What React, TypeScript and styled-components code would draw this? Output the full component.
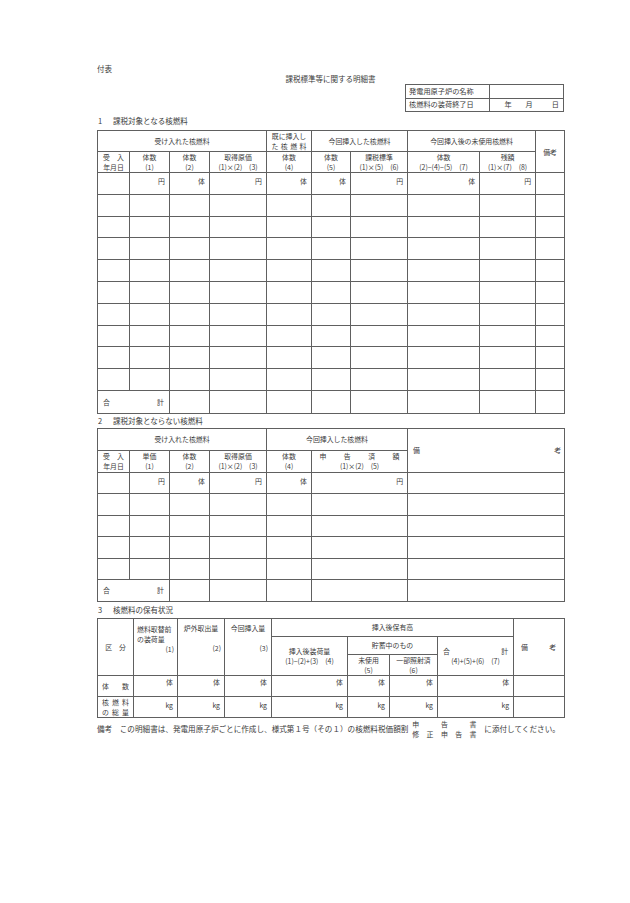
import React from "react";
import styled, { createGlobalStyle } from "styled-components";

const GlobalStyle = createGlobalStyle`
  html, body {
    margin: 0;
    padding: 0;
    background: #fff;
  }
  body {
    font-family: "Noto Sans CJK JP", "Noto Sans", sans-serif;
    color: #3a3a3a;
  }
`;

const Page = styled.div`
  width: 467px;
  margin-left: 97px;
  padding-top: 64px;
  font-size: 7.5px;
  line-height: 10px;
`;

const Caption = styled.div`
  height: 10px;
  line-height: 10px;
`;

const Title = styled.div`
  height: 10px;
  line-height: 10px;
  text-align: center;
`;

const InfoBox = styled.table`
  width: 159px;
  margin: 0 0 0 auto;
  border-collapse: collapse;
  table-layout: fixed;
  font-size: 7.2px;
`;

const InfoRow = styled.tr`
  height: 13.5px;
`;

const InfoCell = styled.td<{ $w?: number }>`
  border: 1px solid #606060;
  padding: 0 3px;
  width: ${(p) => (p.$w ? `${p.$w}px` : "auto")};
  white-space: nowrap;
  line-height: 11px;
`;

const DateParts = styled.div`
  display: flex;
  justify-content: flex-end;
  padding-right: 1px;

  span:nth-child(1) {
    margin-right: 14px;
  }
  span:nth-child(2) {
    margin-right: 19px;
  }
`;

const SectionLabel = styled.div<{ $h: number }>`
  height: ${(p) => p.$h}px;
  display: flex;
  align-items: center;
  padding-left: 1px;
`;

const Num = styled.span`
  width: 15px;
`;

const Grid = styled.table`
  width: 100%;
  table-layout: fixed;
  border-collapse: collapse;
  font-size: 6.9px;
  line-height: 10px;
`;

const Col = styled.col<{ $w: number }>`
  width: ${(p) => p.$w}px;
`;

const Row = styled.tr<{ $h: number }>`
  height: ${(p) => p.$h}px;
`;

type Align = "left" | "center" | "right";

const Cell = styled.td<{ $align?: Align; $valign?: "top" | "middle"; $pad?: string }>`
  border: 1px solid #606060;
  padding: ${(p) => p.$pad ?? "0 3px"};
  text-align: ${(p) => p.$align ?? "center"};
  vertical-align: ${(p) => p.$valign ?? "middle"};
  white-space: nowrap;
  overflow: hidden;
`;

const UnitCell = styled.td<{ $top?: number }>`
  border: 1px solid #606060;
  padding: ${(p) => p.$top ?? 3}px 4px 0 0;
  text-align: right;
  vertical-align: top;
  white-space: nowrap;
`;

const SpreadLine = styled.span<{ $w?: number }>`
  display: flex;
  justify-content: space-between;
  width: ${(p) => (p.$w ? `${p.$w}px` : "auto")};
  margin: ${(p) => (p.$w ? "0 auto" : "0")};
`;

const Spread = ({ text, w }: { text: string; w?: number }) => (
  <SpreadLine $w={w}>
    {[...text].map((c, i) => (
      <span key={i}>{c}</span>
    ))}
  </SpreadLine>
);

const Line = styled.div<{ $align?: Align }>`
  text-align: ${(p) => p.$align ?? "center"};
  min-height: 10px;
`;

const Note = styled.div`
  display: flex;
  align-items: center;
  height: 22px;
  white-space: nowrap;
  font-size: 7.6px;
`;

const NoteStack = styled.div`
  display: flex;
  flex-direction: column;
  width: 64px;
  margin: 0 8px 0 4px;
  font-size: 6.9px;
  line-height: 10px;
`;

const t1Cols = [32, 40, 40, 57, 45, 39, 57, 72, 56, 29];
const t1Units = ["", "円", "体", "円", "体", "体", "円", "体", "円", ""];

const t2Cols = [32, 40, 40, 57, 45, 96, 157];
const t2Units = ["", "円", "体", "円", "体", "円", ""];

const t3Cols = [36, 44, 47, 47, 76, 42, 48, 76, 51];

const Blank = ({ n }: { n: number }) => (
  <>
    {Array.from({ length: n }, (_, i) => (
      <Cell key={i} />
    ))}
  </>
);

const TaxableTable = () => (
  <Grid>
    <colgroup>
      {t1Cols.map((w, i) => (
        <Col key={i} $w={w} />
      ))}
    </colgroup>
    <tbody>
      <Row $h={21}>
        <Cell colSpan={4}>受け入れた核燃料</Cell>
        <Cell>
          <Line>既に挿入し</Line>
          <Spread text="た核燃料" w={35} />
        </Cell>
        <Cell colSpan={2}>今回挿入した核燃料</Cell>
        <Cell colSpan={2}>今回挿入後の未使用核燃料</Cell>
        <Cell rowSpan={2}>備考</Cell>
      </Row>
      <Row $h={21}>
        <Cell>
          <Spread text="受入" w={21} />
          <Line>年月日</Line>
        </Cell>
        <Cell>
          <Line>体数</Line>
          <Line>(1)</Line>
        </Cell>
        <Cell>
          <Line>体数</Line>
          <Line>(2)</Line>
        </Cell>
        <Cell>
          <Line>取得原価</Line>
          <Line>(1)×(2)　(3)</Line>
        </Cell>
        <Cell>
          <Line>体数</Line>
          <Line>(4)</Line>
        </Cell>
        <Cell>
          <Line>体数</Line>
          <Line>(5)</Line>
        </Cell>
        <Cell>
          <Line>課税標準</Line>
          <Line>(1)×(5)　(6)</Line>
        </Cell>
        <Cell>
          <Line>体数</Line>
          <Line>(2)−(4)−(5)　(7)</Line>
        </Cell>
        <Cell>
          <Line>残額</Line>
          <Line>(1)×(7)　(8)</Line>
        </Cell>
      </Row>
      <Row $h={21.8}>
        {t1Units.map((u, i) => (
          <UnitCell key={i}>{u}</UnitCell>
        ))}
      </Row>
      {Array.from({ length: 9 }, (_, r) => (
        <Row key={r} $h={21.8}>
          <Blank n={10} />
        </Row>
      ))}
      <Row $h={23}>
        <Cell colSpan={2} $pad="0 5px">
          <Spread text="合計" />
        </Cell>
        <Blank n={8} />
      </Row>
    </tbody>
  </Grid>
);

const ExemptTable = () => (
  <Grid>
    <colgroup>
      {t2Cols.map((w, i) => (
        <Col key={i} $w={w} />
      ))}
    </colgroup>
    <tbody>
      <Row $h={22}>
        <Cell colSpan={4}>受け入れた核燃料</Cell>
        <Cell colSpan={2}>今回挿入した核燃料</Cell>
        <Cell rowSpan={2} $pad="0 3px 0 5px">
          <Spread text="備考" />
        </Cell>
      </Row>
      <Row $h={22}>
        <Cell>
          <Spread text="受入" w={21} />
          <Line>年月日</Line>
        </Cell>
        <Cell>
          <Line>単価</Line>
          <Line>(1)</Line>
        </Cell>
        <Cell>
          <Line>体数</Line>
          <Line>(2)</Line>
        </Cell>
        <Cell>
          <Line>取得原価</Line>
          <Line>(1)×(2)　(3)</Line>
        </Cell>
        <Cell>
          <Line>体数</Line>
          <Line>(4)</Line>
        </Cell>
        <Cell>
          <Spread text="申告済額" w={80} />
          <Line>(1)×(2)　(5)</Line>
        </Cell>
      </Row>
      <Row $h={21.4}>
        {t2Units.map((u, i) => (
          <UnitCell key={i}>{u}</UnitCell>
        ))}
      </Row>
      {Array.from({ length: 4 }, (_, r) => (
        <Row key={r} $h={21.4}>
          <Blank n={7} />
        </Row>
      ))}
      <Row $h={22}>
        <Cell colSpan={2} $pad="0 5px">
          <Spread text="合計" />
        </Cell>
        <Blank n={5} />
      </Row>
    </tbody>
  </Grid>
);

const HoldingTable = () => (
  <Grid>
    <colgroup>
      {t3Cols.map((w, i) => (
        <Col key={i} $w={w} />
      ))}
    </colgroup>
    <tbody>
      <Row $h={18}>
        <Cell rowSpan={3}>区　分</Cell>
        <Cell rowSpan={3} $valign="top" $pad="5px 3px 0">
          <Line $align="left">燃料取替前</Line>
          <Line $align="left">の装荷量</Line>
          <Line $align="right">(1)</Line>
        </Cell>
        <Cell rowSpan={3} $valign="top" $pad="4px 3px 0">
          <Line>炉外取出量</Line>
          <Line />
          <Line $align="right">(2)</Line>
        </Cell>
        <Cell rowSpan={3} $valign="top" $pad="4px 3px 0">
          <Line>今回挿入量</Line>
          <Line />
          <Line $align="right">(3)</Line>
        </Cell>
        <Cell colSpan={4}>挿入後保有高</Cell>
        <Cell rowSpan={3} $pad="0 8px 0 7px">
          <Spread text="備考" />
        </Cell>
      </Row>
      <Row $h={18}>
        <Cell rowSpan={2}>
          <Line>挿入後装荷量</Line>
          <Line>(1)−(2)+(3)　(4)</Line>
        </Cell>
        <Cell colSpan={2}>貯蓄中のもの</Cell>
        <Cell rowSpan={2} $pad="0 5px">
          <Spread text="合計" />
          <Line>(4)+(5)+(6)　(7)</Line>
        </Cell>
      </Row>
      <Row $h={21}>
        <Cell>
          <Line>未使用</Line>
          <Line>(5)</Line>
        </Cell>
        <Cell>
          <Line>一部照射済</Line>
          <Line>(6)</Line>
        </Cell>
      </Row>
      <Row $h={21}>
        <Cell $pad="0 4px">
          <Spread text="体数" />
        </Cell>
        {Array.from({ length: 7 }, (_, i) => (
          <UnitCell key={i} $top={1}>
            体
          </UnitCell>
        ))}
        <Cell />
      </Row>
      <Row $h={21}>
        <Cell $pad="0 4px">
          <Spread text="核燃料" />
          <Spread text="の総量" />
        </Cell>
        {Array.from({ length: 7 }, (_, i) => (
          <UnitCell key={i} $top={3}>
            kg
          </UnitCell>
        ))}
        <Cell />
      </Row>
    </tbody>
  </Grid>
);

export default function App() {
  return (
    <>
      <GlobalStyle />
      <Page>
        <Caption>付表</Caption>
        <Title>課税標準等に関する明細書</Title>
        <InfoBox>
          <tbody>
            <InfoRow>
              <InfoCell $w={77}>発電用原子炉の名称</InfoCell>
              <InfoCell />
            </InfoRow>
            <InfoRow>
              <InfoCell $w={77}>核燃料の装荷終了日</InfoCell>
              <InfoCell>
                <DateParts>
                  <span>年</span>
                  <span>月</span>
                  <span>日</span>
                </DateParts>
              </InfoCell>
            </InfoRow>
          </tbody>
        </InfoBox>
        <SectionLabel $h={18}>
          <Num>1</Num>課税対象となる核燃料
        </SectionLabel>
        <TaxableTable />
        <SectionLabel $h={14}>
          <Num>2</Num>課税対象とならない核燃料
        </SectionLabel>
        <ExemptTable />
        <SectionLabel $h={16}>
          <Num>3</Num>核燃料の保有状況
        </SectionLabel>
        <HoldingTable />
        <Note>
          備考　この明細書は、発電用原子炉ごとに作成し、様式第１号（その１）の核燃料税価額割
          <NoteStack>
            <Spread text="申告書" />
            <Spread text="修正申告書" />
          </NoteStack>
          に添付してください。
        </Note>
      </Page>
    </>
  );
}
